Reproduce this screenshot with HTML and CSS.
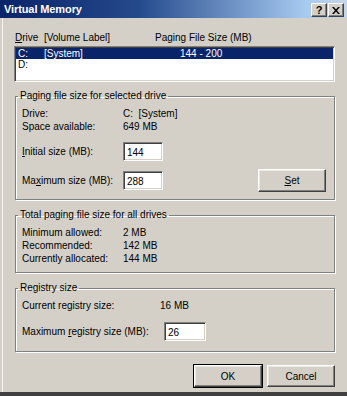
FILE: index.html
```html
<!DOCTYPE html>
<html lang="en">
<head>
    <meta charset="UTF-8">
    <title>Virtual Memory</title>
    <link rel="stylesheet" href="styles.css">
</head>
<body>
<div class="window">
    <div class="titlebar">
        <span class="title">Virtual Memory</span>
        <div class="caption-buttons">
            <span class="cap-btn help">?</span>
            <span class="cap-btn close">
                <svg width="8" height="7" viewBox="0 0 8 7"><path d="M0 0h2l2 2.5L6 0h2L5 3.5 8 7H6L4 4.5 2 7H0l3-3.5z" fill="#000"/></svg>
            </span>
        </div>
    </div>
    <div class="dialog">
        <div class="list-header">
            <span class="col-drive"><u>D</u>rive&nbsp; [Volume Label]</span>
            <span>Paging File Size (MB)</span>
        </div>
        <div class="listbox">
            <div class="row selected">
                <span class="c1">C:</span><span class="c2">[System]</span><span>144 - 200</span>
            </div>
            <div class="row">
                <span class="c1">D:</span>
            </div>
        </div>

        <fieldset class="group">
            <legend>Paging file size for selected drive</legend>
            <div class="info"><span class="label">Drive:</span><span>C:&nbsp; [System]</span></div>
            <div class="info"><span class="label">Space available:</span><span>649 MB</span></div>
            <div class="field first">
                <span class="label"><u>I</u>nitial size (MB):</span>
                <input class="textbox" type="text" value="144">
            </div>
            <div class="field">
                <span class="label">Ma<u>x</u>imum size (MB):</span>
                <input class="textbox" type="text" value="288">
                <button class="btn set"><u>S</u>et</button>
            </div>
        </fieldset>

        <fieldset class="group">
            <legend>Total paging file size for all drives</legend>
            <div class="info"><span class="label">Minimum allowed:</span><span>2 MB</span></div>
            <div class="info"><span class="label">Recommended:</span><span>142 MB</span></div>
            <div class="info"><span class="label">Currently allocated:</span><span>144 MB</span></div>
        </fieldset>

        <fieldset class="group registry">
            <legend>Registry size</legend>
            <div class="info"><span class="label">Current registry size:</span><span>16 MB</span></div>
            <div class="field roomy">
                <span class="label">Maximum <u>r</u>egistry size (MB):</span>
                <input class="textbox" type="text" value="26">
            </div>
        </fieldset>

        <div class="actions">
            <button class="btn default">OK</button>
            <button class="btn">Cancel</button>
        </div>
    </div>
</div>
</body>
</html>
```

FILE: styles.css
```css
body {
    margin: 0;
    font-family: "Liberation Sans", Arial, sans-serif;
    font-size: 10px;
    color: #000;
}
.window {
    width: 347px;
    height: 396px;
    box-sizing: border-box;
    background-color: #d4d0c8;
    display: flex;
    flex-direction: column;
    border-bottom: 4px solid #404040;
    box-shadow: inset 0 -5px 0 #808080;
}
.titlebar {
    height: 18px;
    flex: none;
    display: flex;
    align-items: center;
    justify-content: space-between;
    padding: 0 3px 0 4px;
    background: linear-gradient(to right, #0a246a 0%, #254a8c 40%, #a6caf0 88%, #c6d6e8 100%);
}
.title {
    color: #fff;
    font-weight: bold;
    font-size: 11px;
    letter-spacing: -0.1px;
}
.caption-buttons {
    display: flex;
    gap: 1px;
    margin-top: 2px;
}
.cap-btn {
    width: 16px;
    height: 14px;
    box-sizing: border-box;
    display: flex;
    align-items: center;
    justify-content: center;
    background-color: #d4d0c8;
    border: 1px solid;
    border-color: #fff #404040 #404040 #fff;
    box-shadow: inset -1px -1px #808080;
    font-weight: bold;
    font-size: 11px;
    line-height: 1;
}
.dialog {
    flex: 1;
    padding: 14px 12px 0 14px;
    background: linear-gradient(to right, #d4d0c8 2px, #f4f2ee 2px, #f4f2ee 3px, #d4d0c8 3px);
}
.list-header {
    display: flex;
    line-height: 12px;
    padding-left: 1px;
}
.col-drive {
    width: 140px;
}
.listbox {
    margin-top: 2px;
    width: 321px;
    height: 36px;
    box-sizing: border-box;
    background-color: #fff;
    border: 1px solid;
    border-color: #808080 #fff #fff #808080;
    box-shadow: inset 1px 1px #404040, inset -1px -1px #d4d0c8;
    padding: 1px;
}
.row {
    display: flex;
    height: 11px;
    line-height: 11px;
    padding-left: 2px;
}
.row.selected {
    background-color: #0a246a;
    color: #fff;
}
.c1 {
    width: 26px;
}
.c2 {
    width: 136px;
}
.group {
    margin: 8px 0 0 1px;
    width: 320px;
    box-sizing: border-box;
    min-width: 0;
    padding: 5px 6px 7px;
    border: 1px solid #808080;
    box-shadow: 1px 1px 0 #fff, inset 1px 1px 0 #fff;
}
.group + .group {
    margin-top: 9px;
}
.group legend {
    padding: 0 2px;
    margin-left: -4px;
    line-height: 12px;
}
.info {
    display: flex;
    line-height: 13px;
}
.label {
    width: 101px;
    flex: none;
}
.registry .label {
    width: 138px;
}
.registry .field .label {
    width: 142px;
}
.field {
    display: flex;
    align-items: center;
    margin-top: 6px;
    height: 23px;
}
.field.first {
    margin-top: 7px;
}
.field.roomy {
    margin-top: 8px;
    padding-bottom: 1px;
}
.textbox {
    width: 40px;
    height: 19px;
    box-sizing: border-box;
    margin: 0;
    padding: 1px 3px 0;
    font-family: inherit;
    font-size: 10px;
    background-color: #fff;
    border: 1px solid;
    border-color: #808080 #fff #fff #808080;
    box-shadow: inset 1px 1px #404040, inset -1px -1px #d4d0c8;
    outline: none;
}
.registry .textbox {
    width: 42px;
}
.btn {
    width: 68px;
    height: 22px;
    box-sizing: border-box;
    margin: 0;
    padding: 0;
    font-family: inherit;
    font-size: 10px;
    color: #000;
    background-color: #d4d0c8;
    border: 1px solid;
    border-color: #fff #404040 #404040 #fff;
    box-shadow: inset -1px -1px #808080, inset 1px 1px #ece9e2;
}
.btn.set {
    margin-left: auto;
    margin-right: 2px;
    height: 23px;
}
.btn.default {
    outline: 1px solid #000;
    outline-offset: 0;
}
.actions {
    display: flex;
    justify-content: flex-end;
    gap: 5px;
    margin-top: 13px;
}
```
